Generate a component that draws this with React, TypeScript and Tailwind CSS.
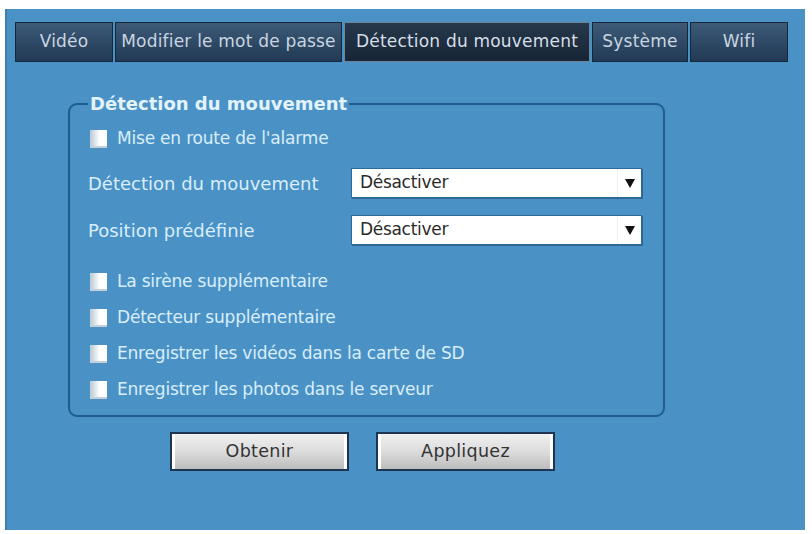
import React from "react";

const font = { fontFamily: '"DejaVu Sans", Verdana, sans-serif' };

function Tab({ label, w, active }: { label: string; w: number; active?: boolean }) {
  return (
    <div
      style={{ width: w }}
      className={
        active
          ? "h-[40px] flex items-center justify-center border border-[#6f8396] bg-gradient-to-b from-[#26384b] to-[#172536] text-[#d6dee6] text-[17px] tracking-[0.2px] whitespace-nowrap"
          : "h-[40px] flex items-center justify-center border border-[#16273a] bg-gradient-to-b from-[#3d5a78] to-[#223a55] text-[#c9d5e0] text-[17px] tracking-[0.2px] whitespace-nowrap"
      }
    >
      {label}
    </div>
  );
}

function Check({ label }: { label: string }) {
  return (
    <div className="h-[24px] flex items-center">
      <div className="ml-[2px] w-[17px] h-[18px] bg-gradient-to-r from-[#c7d3dc] via-white to-white border-l-[2px] border-b-[2px] border-[#c3d0da]" />
      <span className="ml-[10px] text-[17px] text-[#d9eefa] tracking-[-0.2px] whitespace-nowrap">{label}</span>
    </div>
  );
}

function SelectRow({ label }: { label: string }) {
  return (
    <div className="h-[30px] flex items-center">
      <span className="w-[263px] text-[18px] text-[#d9eefa] whitespace-nowrap">{label}</span>
      <div className="w-[291px] h-[30px] bg-white border border-[#2c6a98] flex items-center shadow-[1px_1px_0_#2d6690]">
        <span className="flex-1 pl-[8px] text-[17px] text-[#2a2a2a] tracking-[-0.3px]">Désactiver</span>
        <div className="w-[24px] h-full flex items-center justify-center border-l border-[#eef2f5]">
          <svg width="10" height="9" viewBox="0 0 10 9">
            <path d="M0 0 H10 L5 9 Z" fill="#111" />
          </svg>
        </div>
      </div>
    </div>
  );
}

function Btn({ label }: { label: string }) {
  return (
    <div className="w-[179px] h-[39px] border-[2px] border-[#1d3552] bg-gradient-to-b from-[#f0f0f0] via-[#dcdcdc] to-[#bdbdbd] flex items-center justify-center shadow-[inset_3px_0_0_#ffffff,inset_-3px_0_0_#ffffff]">
      <span className="text-[17.5px] text-[#333] tracking-[0.3px]">{label}</span>
    </div>
  );
}

export default function App() {
  return (
    <div className="w-[812px] h-[534px] bg-white pt-[9px] pl-[5px]" style={font}>
      <div className="w-[800px] h-[521px] bg-[#4a92c6] border-l-[2px] border-[#3f7fb0] pt-[13px] pl-[8px]">
        <div className="flex gap-[2px]">
          <Tab label="Vidéo" w={98} />
          <Tab label="Modifier le mot de passe" w={227} />
          <Tab label="Détection du mouvement" w={246} active />
          <Tab label="Système" w={96} />
          <Tab label="Wifi" w={98} />
        </div>
        <fieldset className="ml-[53px] mt-[31px] w-[597px] h-[324px] border-[2px] border-[#1f5d8e] rounded-[9px] pl-[18px] pr-[10px]">
          <legend className="px-[2px] text-[18px] font-bold text-[#e3f3fb] leading-[22px]">
            Détection du mouvement
          </legend>
          <div className="flex flex-col pt-[12px]">
            <Check label="Mise en route de l'alarme" />
            <div className="mt-[17px]">
              <SelectRow label="Détection du mouvement" />
            </div>
            <div className="mt-[17px]">
              <SelectRow label="Position prédéfinie" />
            </div>
            <div className="mt-[25px] flex flex-col gap-[12px]">
              <Check label="La sirène supplémentaire" />
              <Check label="Détecteur supplémentaire" />
              <Check label="Enregistrer les vidéos dans la carte de SD" />
              <Check label="Enregistrer les photos dans le serveur" />
            </div>
          </div>
        </fieldset>
        <div className="flex gap-[27px] pl-[155px] mt-[15px]">
          <Btn label="Obtenir" />
          <Btn label="Appliquez" />
        </div>
      </div>
    </div>
  );
}
